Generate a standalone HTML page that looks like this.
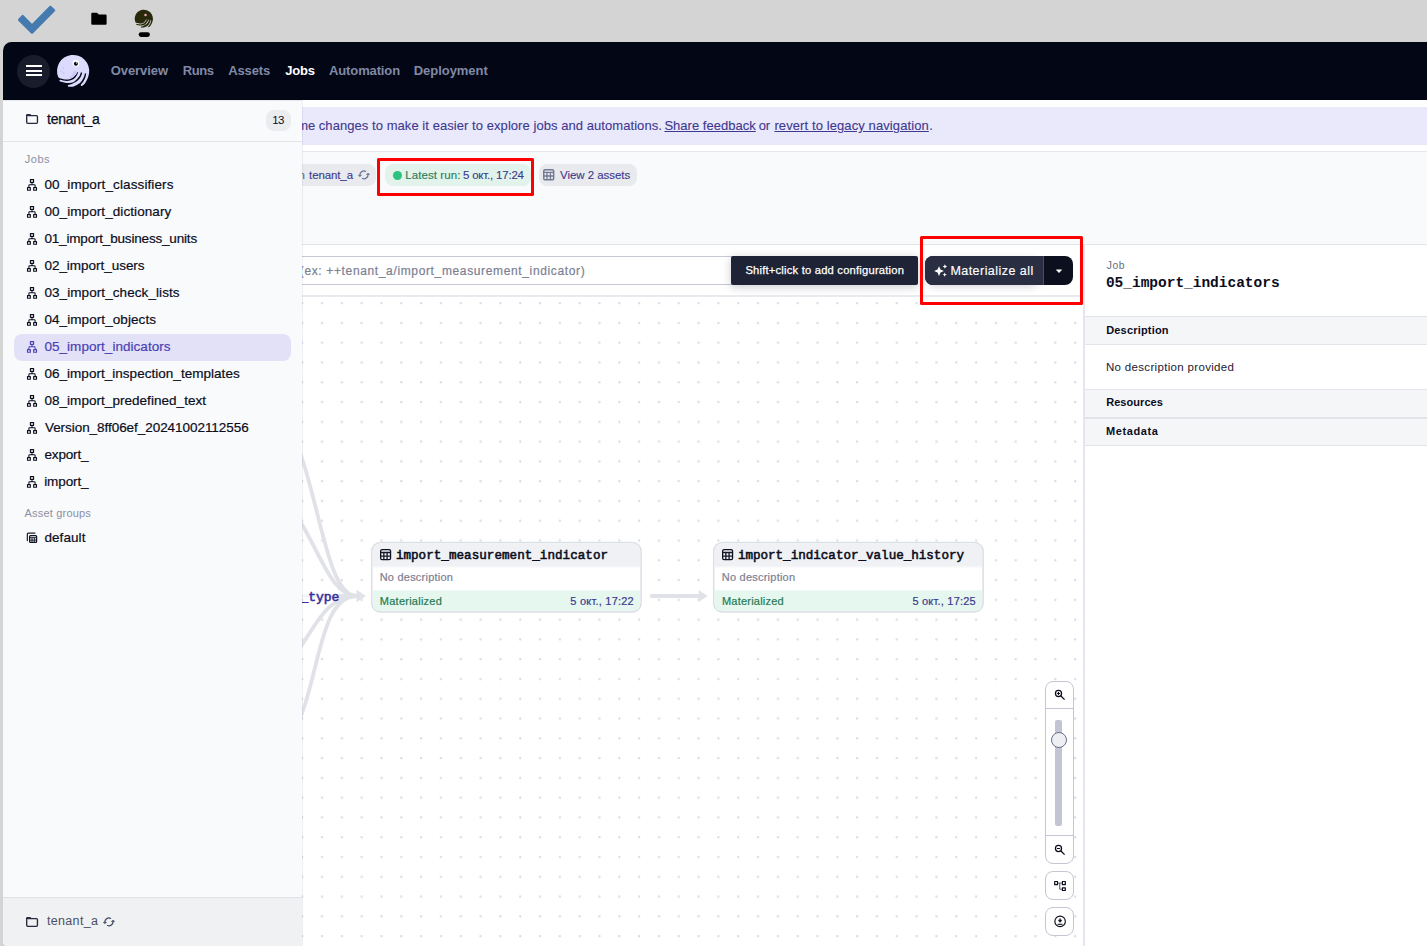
<!DOCTYPE html>
<html lang="en">
<head>
<meta charset="utf-8">
<title>05_import_indicators</title>
<style>
*{box-sizing:border-box;margin:0;padding:0}
html,body{width:1427px;height:946px;overflow:hidden;background:#d4d4d4}
body{position:relative;font-family:"Liberation Sans",sans-serif;font-size:12px;color:#0b0d1c}
i,b.r,.t,svg,.box{position:absolute;display:block}
.t{white-space:nowrap;line-height:16px;height:16px}
.mono{font-family:"Liberation Mono",monospace;font-weight:bold}
svg{overflow:visible}
#win{position:absolute;left:3px;top:42px;width:1424px;height:904px;background:#fff;border-radius:8.500px 0 0 5px;overflow:hidden}
#o{position:absolute;left:-3px;top:-42px;width:1427px;height:946px}
.nv{font-weight:bold;font-size:13px;color:#808aa5;top:63px}
.bn{font-size:13px;color:#3d398f;top:117px;-webkit-text-stroke:.1px currentColor}
.tag{position:absolute;top:164px;height:22px;border-radius:8px;background:#e9eaee}
.tag .t{top:3px;font-size:11.500px;color:#3c3a8c;-webkit-text-stroke:.12px currentColor}
.node{position:absolute;top:543px;width:268px;height:68px}
.fr{position:absolute;left:-1px;top:-1px;width:270px;height:70px;border:1px solid #d6d9e2;border-radius:9px;background:#fff;overflow:hidden;box-shadow:0 0 0 .5px #e4e6ec;transform:translate(.4px,.3px)}
.fr .h{left:0;top:0;width:100%;height:23px;background:#f0f1f4;border-bottom:1px solid #f7f8fa;box-sizing:content-box}
.fr .f{left:0;bottom:0;width:100%;height:21px;background:#e5f7ee}
.node .ti{top:4px;font-family:"Liberation Mono",monospace;font-weight:normal;font-size:12.600px;color:#0b0d1c;-webkit-text-stroke:.55px currentColor}
.node .d{top:27px;font-size:11px;color:#7c8092;-webkit-text-stroke:.2px currentColor}
.node .m{top:50px;font-size:11px;color:#1f7a52;-webkit-text-stroke:.2px currentColor}
.node .dt{top:50px;font-size:11px;color:#3c3a8c;-webkit-text-stroke:.2px currentColor}
.zb{position:absolute;left:1045px;width:29px;border:1px solid #c3c6d3;border-radius:8px;background:#fff}
.sh{position:absolute;left:1085px;width:342px;height:29px;background:#f5f6f8;border-top:1px solid #e3e4ea;border-bottom:1px solid #e3e4ea}
.sh .t{top:6px;font-weight:bold;font-size:11px;color:#0b0d1c}
.row{position:absolute;left:14px;width:277px;height:27px;border-radius:8px}
.row .t{top:5px;font-size:13.500px;color:#0b0d1c;-webkit-text-stroke:.2px currentColor}
.row svg{left:12px;top:6px}
.row.sel{background:#e3e1f7}
.row.sel .t{color:#4a3fb5}
.lab{font-size:11px;color:#8b8fa3}
.red{position:absolute;border:3px solid #fd0000;border-radius:1.500px}
</style>
</head>
<body>
<!-- desktop strip icons -->
<svg width="180" height="42" style="left:0;top:0" viewBox="0 0 180 42">
  <path d="M19.150 19.800L22.700 16.100L32 25.600L50.400 6.900L54 10.400L32 32.600z" fill="#457aaf" stroke="#457aaf" stroke-width="2.400" stroke-linejoin="round"/>
  <path d="M92.300 12.700h4.700l1.800 1.800h6.800a1 1 0 0 1 1 1v8.300a1 1 0 0 1-1 1H92.300a1 1 0 0 1-1-1V13.700a1 1 0 0 1 1-1z" fill="#000"/>
  <g transform="translate(132.440 6.890) scale(.565)"><path d="M5.3 27.3 A16.1 16.1 0 1 1 36.05 23.3L32.6 23.6L28.6 22.6L24.6 21.9C24.23 22.45 23.37 24.13 22.4 25.2C21.43 26.27 20.2 27.57 18.8 28.3C17.4 29.03 15.87 29.55 14.0 29.6C12.13 29.65 9.05 28.98 7.6 28.6C6.15 28.22 5.68 27.52 5.3 27.3z" fill="#28280a"/><path d="M25.6 20.6C25.5 20.93 25.37 21.72 25.0 22.6C24.63 23.48 24.3 24.73 23.4 25.9C22.5 27.07 21.17 28.73 19.6 29.6C18.03 30.47 16.07 31.06 14.0 31.1C11.93 31.14 8.33 30.06 7.2 29.85A.82 .82 0 0 0 7.0 31.45C8.17 31.69 11.7 32.82 14.0 32.9C16.3 32.98 18.83 32.87 20.8 31.9C22.77 30.93 24.65 28.58 25.8 27.1C26.95 25.62 27.33 24.02 27.7 23.0C28.07 21.98 27.95 21.33 28.0 21.0z" fill="#28280a"/><path d="M29.4 21.3C29.33 21.63 29.23 22.48 29.0 23.3C28.77 24.12 28.67 25.03 28.0 26.2C27.33 27.37 26.43 29.05 25.0 30.3C23.57 31.55 21.0 32.93 19.4 33.7C17.8 34.48 16.07 34.74 15.4 34.95A.95 .95 0 0 0 15.7 36.8C16.62 36.69 19.2 36.9 21.2 36.15C23.2 35.4 26.08 33.81 27.7 32.3C29.32 30.79 30.23 28.45 30.9 27.1C31.57 25.75 31.52 25.05 31.7 24.2C31.88 23.35 31.95 22.37 32.0 22.0z" fill="#28280a"/><path d="M33.3 22.4C33.25 22.73 33.15 23.58 33.0 24.4C32.85 25.22 32.82 26.15 32.4 27.3C31.98 28.45 31.22 30.13 30.5 31.3C29.78 32.47 28.5 33.8 28.1 34.3A.95 .95 0 0 0 29.4 35.8C29.87 35.33 31.33 34.2 32.2 33.0C33.07 31.8 33.98 30.1 34.6 28.6C35.22 27.1 35.67 25.1 35.9 24.0C36.13 22.9 35.98 22.33 36.0 22.0z" fill="#28280a"/></g>
  <circle cx="145.500" cy="14.900" r="1.250" fill="#e9a9b4"/>
  <rect x="138.700" y="32.200" width="11.200" height="4.700" rx="2.350" fill="#000"/>
</svg>

<div id="win"><div id="o">
  <!-- top nav -->
  <i style="left:3px;top:42px;width:1424px;height:58px;background:#030615"></i>
  <i style="left:16.500px;top:54.500px;width:33px;height:33px;border-radius:50%;background:#191c2b"></i>
  <i style="left:25.500px;top:65px;width:16px;height:2px;background:#fff"></i>
  <i style="left:25.500px;top:69.500px;width:16px;height:2px;background:#fff"></i>
  <i style="left:25.500px;top:74px;width:16px;height:2px;background:#fff"></i>
  <svg id="logo" width="40" height="40" style="left:53px;top:50px" viewBox="0 0 40 40">
    <path d="M5.3 27.3 A16.1 16.1 0 1 1 36.05 23.3L32.6 23.6L28.6 22.6L24.6 21.9C24.23 22.45 23.37 24.13 22.4 25.2C21.43 26.27 20.2 27.57 18.8 28.3C17.4 29.03 15.87 29.55 14.0 29.6C12.13 29.65 9.05 28.98 7.6 28.6C6.15 28.22 5.68 27.52 5.3 27.3z" fill="#dddbfd"/>
    <path d="M23.9 22.4C23.58 22.83 22.88 24.07 22.0 25.0C21.12 25.93 19.85 27.28 18.6 28.0C17.35 28.72 15.18 29.08 14.5 29.3L16.5 27.2C16.97 26.73 18.62 25.33 19.3 24.4C19.98 23.47 20.08 22.27 20.6 21.6C21.12 20.93 21.85 20.27 22.4 20.4C22.95 20.53 23.65 22.07 23.9 22.4z" fill="#cdc8f7"/>
    <path d="M25.6 20.6C25.5 20.93 25.37 21.72 25.0 22.6C24.63 23.48 24.3 24.73 23.4 25.9C22.5 27.07 21.17 28.73 19.6 29.6C18.03 30.47 16.07 31.06 14.0 31.1C11.93 31.14 8.33 30.06 7.2 29.85A.82 .82 0 0 0 7.0 31.45C8.17 31.69 11.7 32.82 14.0 32.9C16.3 32.98 18.83 32.87 20.8 31.9C22.77 30.93 24.65 28.58 25.8 27.1C26.95 25.62 27.33 24.02 27.7 23.0C28.07 21.98 27.95 21.33 28.0 21.0z" fill="#dddbfd"/>
    <path d="M29.4 21.3C29.33 21.63 29.23 22.48 29.0 23.3C28.77 24.12 28.67 25.03 28.0 26.2C27.33 27.37 26.43 29.05 25.0 30.3C23.57 31.55 21.0 32.93 19.4 33.7C17.8 34.48 16.07 34.74 15.4 34.95A.95 .95 0 0 0 15.7 36.8C16.62 36.69 19.2 36.9 21.2 36.15C23.2 35.4 26.08 33.81 27.7 32.3C29.32 30.79 30.23 28.45 30.9 27.1C31.57 25.75 31.52 25.05 31.7 24.2C31.88 23.35 31.95 22.37 32.0 22.0z" fill="#dddbfd"/>
    <path d="M33.3 22.4C33.25 22.73 33.15 23.58 33.0 24.4C32.85 25.22 32.82 26.15 32.4 27.3C31.98 28.45 31.22 30.13 30.5 31.3C29.78 32.47 28.5 33.8 28.1 34.3A.95 .95 0 0 0 29.4 35.8C29.87 35.33 31.33 34.2 32.2 33.0C33.07 31.8 33.98 30.1 34.6 28.6C35.22 27.1 35.67 25.1 35.9 24.0C36.13 22.9 35.98 22.33 36.0 22.0z" fill="#dddbfd"/>
    <circle cx="22.900" cy="13.400" r="3.300" fill="#fff"/>
    <circle cx="22.900" cy="13.700" r="2" fill="#030615"/>
    <circle cx="23.500" cy="12.900" r=".7" fill="#fff"/>
    <circle cx="10.400" cy="18.200" r="1.100" fill="#cdc9f8"/><circle cx="7.900" cy="20.800" r="1.100" fill="#cdc9f8"/><circle cx="10.400" cy="23.200" r="1.100" fill="#cdc9f8"/>
  </svg>
  <span class="t nv" id="nv1" style="left:110.7px;top:63px;letter-spacing:-0.06px;">Overview</span>
  <span class="t nv" id="nv2" style="left:182.75px;top:63px;letter-spacing:-0.45px;">Runs</span>
  <span class="t nv" id="nv3" style="left:228.15px;top:63px;letter-spacing:-0.11px;">Assets</span>
  <span class="t nv" id="nv4" style="left:285.35px;top:63px;letter-spacing:-0.25px;color:#fff">Jobs</span>
  <span class="t nv" id="nv5" style="left:329.05px;top:63px;letter-spacing:-0.13px;">Automation</span>
  <span class="t nv" id="nv6" style="left:413.75px;top:63px;letter-spacing:-0.04px;">Deployment</span>

  <!-- main background + banner -->
  <i style="left:3px;top:100px;width:1424px;height:846px;background:#f9fafb"></i>
  <i style="left:3px;top:100px;width:1424px;height:51px;background:#fff"></i>
  <i style="left:3px;top:151px;width:1424px;height:1px;background:#e6e7ec"></i>
  <i style="left:3px;top:107px;width:1424px;height:38px;background:#eae8fb"></i>
  <span class="t bn" id="bn" style="left:-0.69px;top:118.00px"><span id="bnA" style="margin-left:-3.48px;margin-right:3.48px">Experimental navigation is enabled. We're testing some </span><span id="bnB" style="letter-spacing:0.06px;margin-left:-3.61px">changes to make it easier to explore jobs and automations. </span><span id="bnC" style="letter-spacing:0.02px;text-decoration:underline;margin-left:-1.20px">Share feedback</span><span id="bnD" style="letter-spacing:-0.4px;margin-left:-0.16px"> or </span><span id="bnE" style="letter-spacing:0.1px;text-decoration:underline;margin-left:1.61px">revert to legacy navigation</span><span id="bnF" style="margin-left:0.45px">.</span></span>
  

  <!-- tags -->
  <div class="tag" style="left:243px;width:133px"><span class="t" id="tg1w" style="left:32.16px;top:3.00px"><span id="tgA" style="color:#5c6280;margin-left:-0.84px;margin-right:0.84px">Job in </span><span id="tg1" style="letter-spacing:-0.11px">tenant_a</span></span>
    <svg width="12" height="12" style="left:115.100px;top:5.100px" viewBox="0 0 12 12"><path d="M7.500 2.300A4.050 4.050 0 0 0 1.850 6.200M4.500 9.500A4.050 4.050 0 0 0 10.050 5.600" fill="none" stroke="#6a7190" stroke-width="1.300" stroke-linecap="round"/><path d="M.1 6.300H3.700L1.850 7.800zM8.200 5.500H11.900L10.050 4.100z" fill="#6a7190" stroke="#6a7190" stroke-width=".4" stroke-linejoin="round"/></svg>
  </div>
  <div class="tag" style="left:385px;width:146px;background:#e1f3ea"><i style="left:8px;top:6.500px;width:9px;height:9px;border-radius:50%;background:#2ec27e"></i><span class="t" id="tg2w" style="left:19.50px;top:3.00px"><span id="tg2" style="letter-spacing:0.08px;color:#2a7d5b;margin-left:0.75px;margin-right:-0.75px">Latest run: </span><span id="tg3" style="letter-spacing:-0.21px">5 окт., 17:24</span></span></div>
  <div class="tag" style="left:539px;width:98px"><span class="t" id="tg4" style="left:21.05px;top:3.01px;letter-spacing:-0.05px;">View 2 assets</span>
    <svg width="12" height="12" style="left:4.200px;top:5.200px" viewBox="0 0 12 12"><rect x=".75" y=".75" width="9.900" height="9.900" rx="1.200" fill="none" stroke="#737a92" stroke-width="1.500"/><path d="M.7 3.400h10M.7 7h10M4 3.400v7.200M7.400 3.400v7.200" stroke="#737a92" stroke-width="1.300" fill="none"/></svg>
  </div>

  <!-- graph area -->
  <i style="left:3px;top:244px;width:1081px;height:702px;background:#fff"></i>
  <i style="left:3px;top:244px;width:1424px;height:1px;background:#e3e4ea"></i>
  <svg width="1081" height="650" style="left:3px;top:296px">
    <defs><pattern id="dp" x="0.730" y="6" width="19.820" height="19.780" patternUnits="userSpaceOnUse"><circle cx="1.200" cy="1.200" r="1.150" fill="#d8d9e2"/></pattern></defs>
    <rect width="1081" height="650" fill="url(#dp)"/>
  </svg>
  <svg width="1427" height="946" style="left:0;top:0" viewBox="0 0 1427 946">
    <g fill="none" stroke="#e1e2e8" stroke-width="3.800">
      <path d="M214.300 363.700C322.900 363.700 309.200 596 357 596"/>
      <path d="M217.600 469C312.900 469 313.200 596 357 596"/>
      <path d="M248 682.300C307.900 682.300 305.800 596 357 596"/>
      <path d="M237.900 769.500C330.200 769.500 301.300 596 357 596"/>
      <path d="M339 596H358"/>
      <path d="M650.300 596H700"/>
    </g>
    <path d="M300 594.600H339V597.400H300z" fill="#f2f3f6"/>
    <path d="M356.800 590.300L365.500 596L356.800 601.700z M699 590.500L707.300 596L699 601.500z" fill="#e1e2e8" stroke="#e1e2e8" stroke-width=".6" stroke-linejoin="round"/>
  </svg>
  <span class="t mono" id="typw" style="left:175.56px;top:590.00px"><span id="typA" style="font-size:13px;color:#35309a;font-weight:normal;-webkit-text-stroke:.55px currentColor;margin-left:0.03px;margin-right:-0.03px">import_indicator</span><span id="typ" style="letter-spacing:0;font-size:13px;color:#35309a;font-weight:normal;-webkit-text-stroke:.55px currentColor">_type</span></span>

  <div class="node" style="left:372px">
    <div class="fr"><i class="h"></i><i class="f"></i></div>
    <svg width="12" height="12" style="left:8.100px;top:5.800px" viewBox="0 0 12 12"><rect x=".65" y=".65" width="9.900" height="9.900" rx="1.400" fill="none" stroke="#0d1020" stroke-width="1.300"/><path d="M.7 3.500h9.800M.7 7.050h9.800" stroke="#151829" stroke-width="1.300" fill="none"/><path d="M3.850 3.300v7.200M7.100 3.300v7.200" stroke="#151829" stroke-width="1.300" fill="none"/></svg>
    <span class="t ti" id="n1t" style="left:23.9px;top:5.01px;letter-spacing:0.02px;">import_measurement_indicator</span>
    <span class="t d" id="n1d" style="left:7.65px;top:26px;letter-spacing:0.23px;">No description</span>
    <span class="t m" id="n1m" style="left:7.85px;top:50px;letter-spacing:0.24px;">Materialized</span>
    <span class="t dt" id="n1x" style="left:198.35px;top:50px;letter-spacing:0.22px;">5 окт., 17:22</span>
  </div>
  <div class="node" style="left:714px">
    <div class="fr"><i class="h"></i><i class="f"></i></div>
    <svg width="12" height="12" style="left:8.100px;top:5.800px" viewBox="0 0 12 12"><rect x=".65" y=".65" width="9.900" height="9.900" rx="1.400" fill="none" stroke="#0d1020" stroke-width="1.300"/><path d="M.7 3.500h9.800M.7 7.050h9.800" stroke="#151829" stroke-width="1.300" fill="none"/><path d="M3.850 3.300v7.200M7.100 3.300v7.200" stroke="#151829" stroke-width="1.300" fill="none"/></svg>
    <span class="t ti" id="n2t" style="left:23.9px;top:5.01px;letter-spacing:-0.02px;">import_indicator_value_history</span>
    <span class="t d" id="n2d" style="left:7.75px;top:26px;letter-spacing:0.23px;">No description</span>
    <span class="t m" id="n2m" style="left:7.95px;top:50px;letter-spacing:0.22px;">Materialized</span>
    <span class="t dt" id="n2x" style="left:198.45px;top:50px;letter-spacing:0.21px;">5 окт., 17:25</span>
  </div>

  <!-- toolbar -->
  <i style="left:3px;top:245px;width:1081px;height:50px;background:#fff"></i>
  <i style="left:3px;top:295px;width:1081px;height:2px;background:#e9eaf0"></i>
  <div class="box" id="input" style="left:203px;top:256px;width:620px;height:29px;border:1px solid #c6c9d6;background:#fff"><span class="t" id="phw" style="left:-20.34px;top:6.00px"><span id="phA" style="font-size:12px;color:#7c8092;-webkit-text-stroke:.2px currentColor;margin-left:0.70px;margin-right:-0.70px">Type an asset subset </span><span id="ph" style="letter-spacing:.64px;font-size:12px;color:#7c8092;-webkit-text-stroke:.2px currentColor;margin-left:-0.66px">(ex: ++tenant_a/import_measurement_indicator)</span></span></div>
  <div class="box" id="tip" style="left:731px;top:256px;width:187px;height:29px;background:#1f2336;border-radius:2px;box-shadow:0 2px 10px rgba(20,22,40,.22)"><span class="t" id="tip1" style="left:14.4px;top:6.01px;letter-spacing:0.21px;color:#fff;font-size:11.2px;-webkit-text-stroke:.25px currentColor">Shift+click to add configuration</span></div>
  <i style="left:927px;top:258px;width:112px;height:26px;border-radius:8px;box-shadow:0 2px 8px rgba(20,24,50,.2)"></i>
  <div class="box" id="mat" style="left:925px;top:256px;width:148px;height:29px;border-radius:8px;background:#0c0f1e;overflow:hidden">
    <i style="left:0;top:0;width:119px;height:29px;background:#2a2e42;border-right:1px solid #4a4e62"></i>
    <svg width="14" height="14" style="left:8.600px;top:7.900px" viewBox="0 0 14 14"><path d="M5 2.200l1.500 3.400 3.400 1.500-3.400 1.500L5 12l-1.500-3.400L.1 7.100l3.400-1.500z" fill="#fff"/><path d="M10.900.2l.7 1.600 1.600.7-1.600.7-.7 1.600-.7-1.600-1.600-.7 1.600-.7zM10.700 8.600l.65 1.400 1.400.65-1.400.65-.65 1.400-.65-1.400-1.400-.65 1.400-.65z" fill="#fff"/></svg>
    <span class="t" id="mat1" style="left:25.45px;top:7px;letter-spacing:0.45px;color:#fff;font-size:12.5px;-webkit-text-stroke:.15px currentColor">Materialize all</span>
    <svg width="8" height="5" style="left:130px;top:13.200px" viewBox="0 0 8 5"><path d="M1.300.800h5.400L4 3.700z" fill="#fff" stroke="#fff" stroke-width=".5" stroke-linejoin="round"/></svg>
  </div>

  <!-- zoom controls -->
  <div class="zb" style="top:681px;height:183px">
    <i style="left:0;top:26px;width:27px;height:1px;background:#c3c6d3"></i>
    <i style="left:0;top:153px;width:27px;height:1px;background:#c3c6d3"></i>
    <i style="left:9px;top:38px;width:7px;height:106px;border-radius:2px;background:#c3c6d2"></i>
    <i style="left:4.500px;top:50.100px;width:16.200px;height:16.200px;border-radius:50%;background:#eeeff2;border:1.200px solid #66708b"></i>
    <svg width="14" height="14" style="left:6px;top:5px" viewBox="0 0 14 14"><circle cx="6.500" cy="6.500" r="3.050" fill="none" stroke="#0b0d1c" stroke-width="1.250"/><path d="M8.700 8.700l3.900 3.900" stroke="#0b0d1c" stroke-width="1.300"/><path d="M4.900 6.500h3.200M6.500 4.900v3.200" stroke="#0b0d1c" stroke-width="1"/></svg>
    <svg width="14" height="14" style="left:6px;top:159.900px" viewBox="0 0 14 14"><circle cx="6.500" cy="6.500" r="3.050" fill="none" stroke="#0b0d1c" stroke-width="1.250"/><path d="M8.700 8.700l3.900 3.900" stroke="#0b0d1c" stroke-width="1.300"/><path d="M4.900 6.500h3.200" stroke="#0b0d1c" stroke-width="1"/></svg>
  </div>
  <div class="zb" style="top:871px;height:29px">
    <svg width="16" height="14" style="left:6px;top:7px" viewBox="0 0 16 14"><path d="M2.700 2.500h2.800v3.200H2.700zM10.400 2.500h2.900v3.200h-2.900zM10.400 8.900h2.900v2.600h-2.900z" fill="none" stroke="#0b0d1c" stroke-width="1.200" stroke-linejoin="round"/><path d="M6.100 4.100H9.800M7.750 4.100V10.200H9.800" fill="none" stroke="#4a4e63" stroke-width="1"/></svg>
  </div>
  <div class="zb" style="top:907px;height:29px">
    <svg width="16" height="16" style="left:6px;top:6px" viewBox="0 0 16 16"><circle cx="8.100" cy="7.400" r="5.250" fill="none" stroke="#0b0d1c" stroke-width="1.150"/><path d="M8.100 4.400v3" stroke="#0b0d1c" stroke-width="1.300"/><path d="M6.300 6.200h3.600L8.100 8.400z" fill="#0b0d1c" stroke="#0b0d1c" stroke-width=".5" stroke-linejoin="round"/><path d="M5.600 10.300h5" stroke="#0b0d1c" stroke-width="1.050"/></svg>
  </div>

  <!-- right panel -->
  <i style="left:1083px;top:245px;width:2px;height:701px;background:#e6e7ee"></i>
  <i style="left:1085px;top:245px;width:342px;height:701px;background:#fff"></i>
  <span class="t" id="p1" style="left:1106.85px;top:258.01px;letter-spacing:0.54px;font-size:10.300px;color:#666c80">Job</span>
  <span class="t mono" id="ptitle" style="left:1105.95px;top:275.01px;letter-spacing:-0.02px;font-size:14.500px;color:#0b0d1c">05_import_indicators</span>
  <div class="sh" style="top:316px"><span class="t" id="p2" style="left:21.2px;top:5px;letter-spacing:0.18px;">Description</span></div>
  <span class="t" id="p3" style="left:1105.9px;top:359.01px;letter-spacing:0.33px;font-size:11.500px;color:#1d2033">No description provided</span>
  <div class="sh" style="top:389px"><span class="t" id="p4" style="left:21.15px;top:4.01px;letter-spacing:0.06px;">Resources</span></div>
  <div class="sh" style="top:418px;height:28px"><span class="t" id="p5" style="left:21.05px;top:4px;letter-spacing:0.58px;">Metadata</span></div>

  <div class="red" style="left:377px;top:158px;width:157px;height:38px"></div>
  <div class="red" style="left:920px;top:236px;width:163px;height:69px"></div>

  <!-- sidebar -->
  <i style="left:3px;top:100px;width:299px;height:846px;background:#f9fafb"></i>
  <i style="left:302px;top:100px;width:1px;height:846px;background:rgba(40,40,95,.075)"></i>
  <i style="left:3px;top:100px;width:299px;height:1px;background:#e6e7ec"></i>
  <svg width="14" height="12" style="left:25px;top:113.100px" viewBox="0 0 14 12"><path d="M2.900 2.650H11.400a1.050 1.050 0 0 1 1.050 1.050V9.250a1.050 1.050 0 0 1-1.050 1.050H2.750a1.050 1.050 0 0 1-1.050-1.050V2.300" fill="none" stroke="#272a3e" stroke-width="1.350"/><path d="M1 2.400a1.400 1.400 0 0 1 1.400-1.400H5.300L7.300 3.100H1z" fill="#272a3e"/></svg>
  <span class="t" id="s0" style="left:47px;top:111px;letter-spacing:-0.23px;font-size:14px;color:#0b0d1c;-webkit-text-stroke:.25px currentColor">tenant_a</span>
  <i style="left:266px;top:110px;width:25px;height:21px;border-radius:8px;background:#ebecef"></i>
  <span class="t" id="s13" style="left:272.35px;top:112.01px;letter-spacing:-0.7px;font-size:11.500px;color:#0b0d1c">13</span>
  <i style="left:3px;top:141px;width:299px;height:1px;background:#e3e4ea"></i>
  <span class="t lab" id="sj" style="left:24.85px;top:151px;letter-spacing:0.49px;">Jobs</span>
  <div class="row" style="top:172px"><svg width="12" height="14" viewBox="0 0 12 14"><g fill="none" stroke="#0b0d1c"><path d="M4.400 1.600h3.200v2.750H4.400zM1.500 9.600h2.850v2.700H1.500zM7.650 9.600h2.850v2.700H7.650z" stroke-width="1.100" stroke-linejoin="round"/><path d="M6 5V6.700M2.900 9V7.400Q2.900 6.700 3.600 6.700H8.400Q9.100 6.700 9.100 7.400V9" stroke-width="1.050"/></g></svg><span class="t" id="r1" style="left:30.45px;top:5.01px;letter-spacing:0.11px;">00_import_classifiers</span></div>
  <div class="row" style="top:199px"><svg width="12" height="14" viewBox="0 0 12 14"><g fill="none" stroke="#0b0d1c"><path d="M4.400 1.600h3.200v2.750H4.400zM1.500 9.600h2.850v2.700H1.500zM7.650 9.600h2.850v2.700H7.650z" stroke-width="1.100" stroke-linejoin="round"/><path d="M6 5V6.700M2.900 9V7.400Q2.900 6.700 3.600 6.700H8.400Q9.100 6.700 9.100 7.400V9" stroke-width="1.050"/></g></svg><span class="t" id="r2" style="left:30.45px;top:5.01px;letter-spacing:0.08px;">00_import_dictionary</span></div>
  <div class="row" style="top:226px"><svg width="12" height="14" viewBox="0 0 12 14"><g fill="none" stroke="#0b0d1c"><path d="M4.400 1.600h3.200v2.750H4.400zM1.500 9.600h2.850v2.700H1.500zM7.650 9.600h2.850v2.700H7.650z" stroke-width="1.100" stroke-linejoin="round"/><path d="M6 5V6.700M2.900 9V7.400Q2.900 6.700 3.600 6.700H8.400Q9.100 6.700 9.100 7.400V9" stroke-width="1.050"/></g></svg><span class="t" id="r3" style="left:30.45px;top:5.01px;letter-spacing:-0.18px;">01_import_business_units</span></div>
  <div class="row" style="top:253px"><svg width="12" height="14" viewBox="0 0 12 14"><g fill="none" stroke="#0b0d1c"><path d="M4.400 1.600h3.200v2.750H4.400zM1.500 9.600h2.850v2.700H1.500zM7.650 9.600h2.850v2.700H7.650z" stroke-width="1.100" stroke-linejoin="round"/><path d="M6 5V6.700M2.900 9V7.400Q2.900 6.700 3.600 6.700H8.400Q9.100 6.700 9.100 7.400V9" stroke-width="1.050"/></g></svg><span class="t" id="r4" style="left:30.45px;top:5.01px;letter-spacing:-0.03px;">02_import_users</span></div>
  <div class="row" style="top:280px"><svg width="12" height="14" viewBox="0 0 12 14"><g fill="none" stroke="#0b0d1c"><path d="M4.400 1.600h3.200v2.750H4.400zM1.500 9.600h2.850v2.700H1.500zM7.650 9.600h2.850v2.700H7.650z" stroke-width="1.100" stroke-linejoin="round"/><path d="M6 5V6.700M2.900 9V7.400Q2.900 6.700 3.600 6.700H8.400Q9.100 6.700 9.100 7.400V9" stroke-width="1.050"/></g></svg><span class="t" id="r5" style="left:30.45px;top:5.01px;letter-spacing:0.08px;">03_import_check_lists</span></div>
  <div class="row" style="top:307px"><svg width="12" height="14" viewBox="0 0 12 14"><g fill="none" stroke="#0b0d1c"><path d="M4.400 1.600h3.200v2.750H4.400zM1.500 9.600h2.850v2.700H1.500zM7.650 9.600h2.850v2.700H7.650z" stroke-width="1.100" stroke-linejoin="round"/><path d="M6 5V6.700M2.900 9V7.400Q2.900 6.700 3.600 6.700H8.400Q9.100 6.700 9.100 7.400V9" stroke-width="1.050"/></g></svg><span class="t" id="r6" style="left:30.45px;top:5.01px;letter-spacing:0.08px;">04_import_objects</span></div>
  <div class="row sel" style="top:334px"><svg width="12" height="14" viewBox="0 0 12 14"><g fill="none" stroke="#4a3fb5"><path d="M4.400 1.600h3.200v2.750H4.400zM1.500 9.600h2.850v2.700H1.500zM7.650 9.600h2.850v2.700H7.650z" stroke-width="1.100" stroke-linejoin="round"/><path d="M6 5V6.700M2.900 9V7.400Q2.900 6.700 3.600 6.700H8.400Q9.100 6.700 9.100 7.400V9" stroke-width="1.050"/></g></svg><span class="t" id="r7" style="left:30.45px;top:5.01px;letter-spacing:0.04px;">05_import_indicators</span></div>
  <div class="row" style="top:361px"><svg width="12" height="14" viewBox="0 0 12 14"><g fill="none" stroke="#0b0d1c"><path d="M4.400 1.600h3.200v2.750H4.400zM1.500 9.600h2.850v2.700H1.500zM7.650 9.600h2.850v2.700H7.650z" stroke-width="1.100" stroke-linejoin="round"/><path d="M6 5V6.700M2.900 9V7.400Q2.900 6.700 3.600 6.700H8.400Q9.100 6.700 9.100 7.400V9" stroke-width="1.050"/></g></svg><span class="t" id="r8" style="left:30.45px;top:5.01px;letter-spacing:0.03px;">06_import_inspection_templates</span></div>
  <div class="row" style="top:388px"><svg width="12" height="14" viewBox="0 0 12 14"><g fill="none" stroke="#0b0d1c"><path d="M4.400 1.600h3.200v2.750H4.400zM1.500 9.600h2.850v2.700H1.500zM7.650 9.600h2.850v2.700H7.650z" stroke-width="1.100" stroke-linejoin="round"/><path d="M6 5V6.700M2.900 9V7.400Q2.900 6.700 3.600 6.700H8.400Q9.100 6.700 9.100 7.400V9" stroke-width="1.050"/></g></svg><span class="t" id="r9" style="left:30.45px;top:5.01px;letter-spacing:0.04px;">08_import_predefined_text</span></div>
  <div class="row" style="top:415px"><svg width="12" height="14" viewBox="0 0 12 14"><g fill="none" stroke="#0b0d1c"><path d="M4.400 1.600h3.200v2.750H4.400zM1.500 9.600h2.850v2.700H1.500zM7.650 9.600h2.850v2.700H7.650z" stroke-width="1.100" stroke-linejoin="round"/><path d="M6 5V6.700M2.900 9V7.400Q2.900 6.700 3.600 6.700H8.400Q9.100 6.700 9.100 7.400V9" stroke-width="1.050"/></g></svg><span class="t" id="r10" style="left:30.95px;top:5.01px;letter-spacing:-0.05px;">Version_8ff06ef_20241002112556</span></div>
  <div class="row" style="top:442px"><svg width="12" height="14" viewBox="0 0 12 14"><g fill="none" stroke="#0b0d1c"><path d="M4.400 1.600h3.200v2.750H4.400zM1.500 9.600h2.850v2.700H1.500zM7.650 9.600h2.850v2.700H7.650z" stroke-width="1.100" stroke-linejoin="round"/><path d="M6 5V6.700M2.900 9V7.400Q2.900 6.700 3.600 6.700H8.400Q9.100 6.700 9.100 7.400V9" stroke-width="1.050"/></g></svg><span class="t" id="r11" style="left:30.45px;top:5.01px;letter-spacing:-0.15px;">export_</span></div>
  <div class="row" style="top:469px"><svg width="12" height="14" viewBox="0 0 12 14"><g fill="none" stroke="#0b0d1c"><path d="M4.400 1.600h3.200v2.750H4.400zM1.500 9.600h2.850v2.700H1.500zM7.650 9.600h2.850v2.700H7.650z" stroke-width="1.100" stroke-linejoin="round"/><path d="M6 5V6.700M2.900 9V7.400Q2.900 6.700 3.600 6.700H8.400Q9.100 6.700 9.100 7.400V9" stroke-width="1.050"/></g></svg><span class="t" id="r12" style="left:30.2px;top:5.01px;letter-spacing:-0.1px;">import_</span></div>
  <span class="t lab" id="sa" style="left:24.6px;top:505.01px;letter-spacing:0.18px;">Asset groups</span>
  <div class="row" style="top:525px"><svg width="12" height="12" style="left:12px;top:7px" viewBox="0 0 12 12"><path d="M1.350 8.600V2.100Q1.350 1.150 2.300 1.150H8.900" fill="none" stroke="#1c1f30" stroke-width="1.200" stroke-linecap="round"/><rect x="3.600" y="3.500" width="7" height="6.900" rx=".9" fill="none" stroke="#0d1020" stroke-width="1.250"/><path d="M3.600 5.700h7M3.600 8.100h7M6 5.700v4.700M8.300 5.700v4.700" stroke="#1c1f30" stroke-width="1" fill="none"/></svg><span class="t" id="r13" style="left:30.45px;top:5px;letter-spacing:0.07px;">default</span></div>
  <i style="left:3px;top:897px;width:299px;height:49px;background:#f0f1f3"></i>
  <i style="left:3px;top:897px;width:299px;height:1px;background:#dfe1e7"></i>
  <svg width="14" height="12" style="left:25px;top:915.900px" viewBox="0 0 14 12"><path d="M2.900 2.650H11.400a1.050 1.050 0 0 1 1.050 1.050V9.250a1.050 1.050 0 0 1-1.050 1.050H2.750a1.050 1.050 0 0 1-1.050-1.050V2.300" fill="none" stroke="#272a3e" stroke-width="1.350"/><path d="M1 2.400a1.400 1.400 0 0 1 1.400-1.400H5.300L7.300 3.100H1z" fill="#272a3e"/></svg>
  <span class="t" id="sf" style="left:47.05px;top:913px;letter-spacing:0.31px;font-size:12.500px;color:#4b5066">tenant_a</span>
  <svg width="12" height="12" style="left:103px;top:916px" viewBox="0 0 12 12"><path d="M7.500 2.300A4.050 4.050 0 0 0 1.850 6.200M4.500 9.500A4.050 4.050 0 0 0 10.050 5.600" fill="none" stroke="#3f4862" stroke-width="1.300" stroke-linecap="round"/><path d="M.1 6.300H3.700L1.850 7.800zM8.200 5.500H11.900L10.050 4.100z" fill="#3f4862" stroke="#3f4862" stroke-width=".4" stroke-linejoin="round"/></svg>
</div></div>
</body>
</html>
